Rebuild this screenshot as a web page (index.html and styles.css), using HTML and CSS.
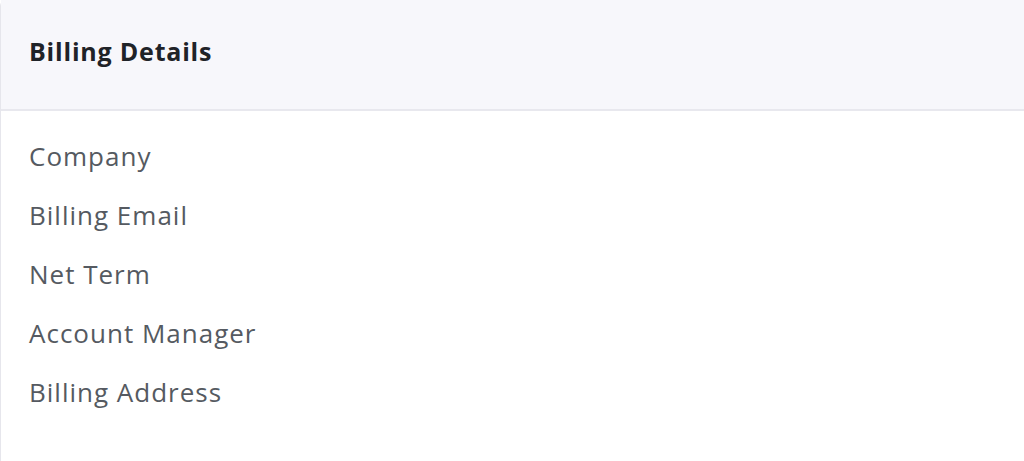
FILE: index.html
```html
<!DOCTYPE html>
<html lang="en">
<head>
<meta charset="utf-8">
<title>Billing Details</title>
<link rel="stylesheet" href="styles.css">
</head>
<body>
<section class="card">
  <header class="card-header">
    <h2 class="card-title">Billing Details</h2>
  </header>
  <ul class="detail-list">
    <li class="detail-item">Company</li>
    <li class="detail-item">Billing Email</li>
    <li class="detail-item">Net Term</li>
    <li class="detail-item">Account Manager</li>
    <li class="detail-item">Billing Address</li>
  </ul>
</section>
</body>
</html>
```

FILE: styles.css
```css
html, body {
  margin: 0;
  padding: 0;
  background: #ffffff;
}

body {
  font-family: "Open Sans", "Noto Sans", sans-serif;
}

.card {
  height: 461px;
  box-sizing: border-box;
  border-left: 1px solid #e6e6ec;
  border-top-left-radius: 6px;
  background: #ffffff;
}

.card-header {
  height: 111px;
  box-sizing: border-box;
  display: flex;
  align-items: center;
  padding: 0 28px 8px;
  background: #f7f7fb;
  border-bottom: 2px solid #e8e8ee;
}

.card-title {
  margin: 0;
  font-size: 25px;
  font-weight: 700;
  color: #1f2328;
  letter-spacing: 0.8px;
}

.detail-list {
  list-style: none;
  margin: 0;
  padding: 16px 28px 0;
}

.detail-item {
  height: 59px;
  line-height: 59px;
  font-size: 26px;
  color: #555a61;
  letter-spacing: 1px;
}
```
